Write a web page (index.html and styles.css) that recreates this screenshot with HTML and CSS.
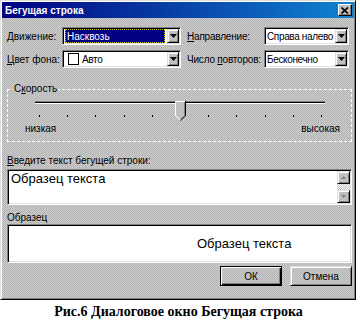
FILE: index.html
```html
<!DOCTYPE html>
<html lang="ru">
<head>
    <meta charset="UTF-8">
    <title>Бегущая строка</title>
    <link rel="stylesheet" href="styles.css">
</head>
<body>
    <div class="dialog">
        <div class="titlebar">
            <span class="title">Бегущая строка</span>
            <span class="close-btn">
                <svg width="8" height="7" viewBox="0 0 8 7">
                    <path d="M0.5 0.5 L7 6.5 M7 0.5 L0.5 6.5" stroke="#000" stroke-width="1.7" fill="none"/>
                </svg>
            </span>
        </div>

        <div class="content">
            <!-- верхние настройки -->
            <div class="options">
                <span class="opt-label"><u>Д</u>вижение:</span>
                <div class="combo">
                    <span class="combo-value selected">Насквозь</span>
                    <span class="combo-btn"><svg width="7" height="4" viewBox="0 0 7 4"><path d="M0 0 H7 L3.5 4 Z" fill="#000"/></svg></span>
                </div>
                <span class="opt-label right"><u>Н</u>аправление:</span>
                <div class="combo">
                    <span class="combo-value">Справа налево</span>
                    <span class="combo-btn"><svg width="7" height="4" viewBox="0 0 7 4"><path d="M0 0 H7 L3.5 4 Z" fill="#000"/></svg></span>
                </div>

                <span class="opt-label"><u>Ц</u>вет фона:</span>
                <div class="combo">
                    <span class="combo-value"><span class="swatch"></span>Авто</span>
                    <span class="combo-btn"><svg width="7" height="4" viewBox="0 0 7 4"><path d="M0 0 H7 L3.5 4 Z" fill="#000"/></svg></span>
                </div>
                <span class="opt-label right">Число <u>п</u>овторов:</span>
                <div class="combo">
                    <span class="combo-value">Бесконечно</span>
                    <span class="combo-btn"><svg width="7" height="4" viewBox="0 0 7 4"><path d="M0 0 H7 L3.5 4 Z" fill="#000"/></svg></span>
                </div>
            </div>

            <!-- скорость -->
            <div class="group">
                <span class="group-title">С<u>к</u>орость</span>
                <div class="slider">
                    <div class="track"></div>
                    <svg class="thumb" width="11" height="20" viewBox="0 0 11 20">
                        <path d="M0.5 0.5 H10.5 V14.5 L5.5 19.5 L0.5 14.5 Z" fill="#c0c0c0"/>
                        <polyline points="0.5,15 0.5,0.5 10,0.5" stroke="#fff" fill="none"/>
                        <polyline points="1,15 5.5,19.3" stroke="#fff" fill="none"/>
                        <polyline points="10.5,0 10.5,14.7 5.5,19.7" stroke="#000" fill="none"/>
                        <polyline points="9.5,1.5 9.5,14.3 5.5,18.3" stroke="#808080" fill="none"/>
                    </svg>
                    <div class="ticks">
                        <i></i><i></i><i></i><i></i><i></i><i></i><i></i><i></i><i></i><i></i><i></i>
                    </div>
                </div>
                <div class="speed-labels">
                    <span>низкая</span>
                    <span>высокая</span>
                </div>
            </div>

            <div class="field-label"><u>В</u>ведите текст бегущей строки:</div>
            <div class="text-box">
                <div class="text">Образец текста</div>
                <div class="scrollbar">
                    <span class="scroll-btn"><svg width="5" height="3" viewBox="0 0 5 3"><path d="M2.5 0 L5 3 H0 Z" fill="#808080"/></svg></span>
                    <span class="scroll-track"></span>
                    <span class="scroll-btn"><svg width="5" height="3" viewBox="0 0 5 3"><path d="M0 0 H5 L2.5 3 Z" fill="#808080"/></svg></span>
                </div>
            </div>

            <div class="field-label sample-label">Образец</div>
            <div class="sample-box">
                <span>Образец текста</span>
            </div>

            <div class="buttons">
                <button class="btn default">ОК</button>
                <button class="btn">Отмена</button>
            </div>
        </div>
    </div>

    <div class="caption">Рис.6 Диалоговое окно Бегущая строка</div>
</body>
</html>
```

FILE: styles.css
```css
body {
    margin: 0;
    background-color: #fff;
    font-family: 'Liberation Sans', Arial, sans-serif;
    font-size: 10px;
    color: #000;
}

.dialog {
    width: 356px;
    height: 300px;
    box-sizing: border-box;
    padding: 1px;
    background: #c0c0c0 repeating-conic-gradient(#cbcbcb 0 25%, #b5b5b5 0 50%) 0 0 / 2px 2px;
    border: 1px solid;
    border-color: #dfdfdf #000 #000 #dfdfdf;
    box-shadow: inset 1px 1px #fff, inset -1px -1px #808080;
}

.titlebar {
    display: flex;
    align-items: center;
    justify-content: space-between;
    height: 16px;
    padding: 0 2px 0 3px;
    background: linear-gradient(90deg, #000080, #1084d0);
    color: #fff;
    font-weight: bold;
    font-size: 10px;
}

.close-btn {
    display: flex;
    align-items: center;
    justify-content: center;
    width: 14px;
    height: 12px;
    box-sizing: border-box;
    background: #c0c0c0;
    border: 1px solid;
    border-color: #fff #000 #000 #fff;
    box-shadow: inset -1px -1px #808080;
}

.content {
    padding: 9px 2px 0 5px;
}

/* верхняя сетка настроек */
.options {
    display: grid;
    grid-template-columns: 55px 119px 83px 85px;
    grid-auto-rows: 18px;
    row-gap: 5px;
    align-items: center;
}

.opt-label {
    white-space: nowrap;
}

.opt-label.right {
    padding-left: 6px;
    letter-spacing: -0.2px;
}

.combo {
    display: flex;
    height: 18px;
    box-sizing: border-box;
    padding: 1px;
    background: #fff;
    border: 1px solid;
    border-color: #808080 #fff #fff #808080;
    box-shadow: inset 1px 1px #000, inset -1px -1px #dfdfdf;
}

.combo-value {
    flex: 1;
    display: flex;
    align-items: center;
    gap: 3px;
    padding-left: 1px;
    letter-spacing: -0.35px;
    white-space: nowrap;
    overflow: hidden;
}

.combo-value.selected {
    margin: 0 2px 0 1px;
    padding-left: 2px;
    letter-spacing: 0;
    background: #000080;
    color: #fff;
    outline: 1px dotted #c8c800;
    outline-offset: -1px;
}

.swatch {
    width: 9px;
    height: 10px;
    margin-left: 3px;
    background: #fff;
    border: 1px solid #000;
}

.combo-btn,
.scroll-btn,
.btn {
    box-sizing: border-box;
    background: #c0c0c0 repeating-conic-gradient(#cbcbcb 0 25%, #b5b5b5 0 50%) 0 0 / 2px 2px;
    border: 1px solid;
    border-color: #dfdfdf #000 #000 #dfdfdf;
    box-shadow: inset 1px 1px #fff, inset -1px -1px #808080;
}

.combo-btn {
    flex: none;
    width: 12px;
    display: flex;
    align-items: center;
    justify-content: center;
}

/* группа "Скорость" */
.group {
    position: relative;
    height: 53px;
    box-sizing: border-box;
    margin-top: 21px;
    border: 1px dashed #fff;
}

.group-title {
    position: absolute;
    top: -7px;
    left: 5px;
    padding: 0 1px;
    line-height: 12px;
    background: #c0c0c0;
}

.slider {
    position: relative;
    width: 290px;
    height: 18px;
    margin: 11px 0 0 27px;
}

.track {
    height: 1px;
    margin-top: 6px;
    background: #000;
    border-top: 1px solid #808080;
    border-bottom: 1px solid #fff;
}

.thumb {
    position: absolute;
    left: 140px;
    top: 0;
}

.ticks {
    display: flex;
    justify-content: space-between;
    padding: 0 3px 0 4px;
    margin-top: 11px;
}

.ticks i {
    width: 1px;
    height: 2px;
    background: #000;
}

.speed-labels {
    display: flex;
    justify-content: space-between;
    padding: 0 11px 0 17px;
    margin-top: 4px;
    line-height: 12px;
}

/* поля ввода */
.field-label {
    margin-top: 12px;
    line-height: 13px;
}

.text-box,
.sample-box {
    box-sizing: border-box;
    padding: 1px;
    background: #fff;
    border: 1px solid;
    border-color: #808080 #fff #fff #808080;
    box-shadow: inset 1px 1px #000, inset -1px -1px #dfdfdf;
}

.text-box {
    display: flex;
    height: 36px;
    margin-top: 2px;
}

.text-box .text {
    flex: 1;
    padding-left: 2px;
    font-size: 13px;
    line-height: 16px;
}

.scrollbar {
    display: flex;
    flex-direction: column;
    width: 13px;
}

.scroll-btn {
    height: 13px;
    display: flex;
    align-items: center;
    justify-content: center;
}

.scroll-track {
    flex: 1;
    background: repeating-conic-gradient(#fff 0 25%, #c0c0c0 0 50%) 0 0 / 2px 2px;
}

.sample-label {
    margin-top: 6px;
}

.sample-box {
    display: flex;
    align-items: center;
    height: 39px;
    padding-left: 189px;
    font-size: 13px;
}

.buttons {
    display: flex;
    justify-content: flex-end;
    gap: 8px;
    margin-top: 3px;
}

.btn {
    width: 62px;
    height: 20px;
    padding: 0;
    font-family: 'Liberation Sans', Arial, sans-serif;
    font-size: 10px;
    color: #000;
}

.btn.default {
    border-color: #000;
    box-shadow: inset 1px 1px #fff, inset -1px -1px #000, inset -2px -2px #808080;
}

.caption {
    width: 357px;
    margin-top: 4px;
    text-align: center;
    font-family: 'Liberation Serif', 'Times New Roman', serif;
    font-weight: bold;
    font-size: 14px;
    line-height: 16px;
}
```
